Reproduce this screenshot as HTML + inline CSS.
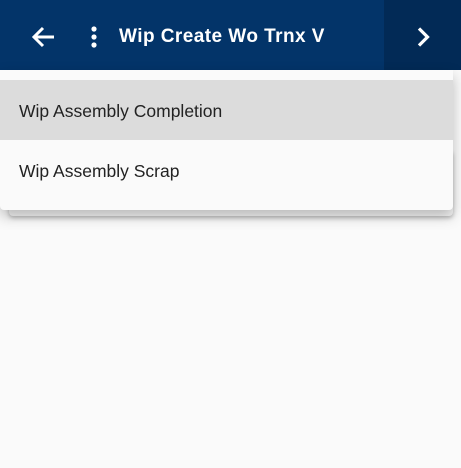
<!DOCTYPE html>
<html><head><style>
body{margin:0;width:461px;height:468px;background:#fafafa;font-family:"Liberation Sans",sans-serif;position:relative;overflow:hidden}
.hdr{position:absolute;left:0;top:0;width:461px;height:70px;background:#033469}
.dk{position:absolute;left:384px;top:0;width:77px;height:70px;background:#022a56}
.title{position:absolute;left:119px;top:26px;color:#fff;font-weight:bold;font-size:19px;letter-spacing:0.45px}
.card{position:absolute;left:9px;top:150px;width:444px;height:66px;background:#f5f5f5;border-radius:4px;box-shadow:0 2px 4px rgba(0,0,0,.25)}
.menu{position:absolute;left:0;top:70px;width:453px;height:140px;background:#fafafa;border-radius:0 0 4px 4px;box-shadow:0 6px 14px rgba(0,0,0,.25)}
.it{position:absolute;left:0;width:453px;height:60px;font-size:17.5px;color:#222;line-height:62px;padding-left:19px;box-sizing:border-box}
</style></head><body>
<div class="card"></div>
<div class="hdr"><div class="dk"></div>
<svg style="position:absolute;left:31px;top:25px" width="26" height="24" viewBox="0 0 26 24"><path d="M23 12H4M12 3L3 12l9 9" stroke="#fff" stroke-width="3" fill="none"/></svg>
<svg style="position:absolute;left:89px;top:25px" width="10" height="24"><circle cx="5" cy="4" r="2.6" fill="#fff"/><circle cx="5" cy="12" r="2.6" fill="#fff"/><circle cx="5" cy="20" r="2.6" fill="#fff"/></svg>
<div class="title">Wip Create Wo Trnx V</div>
<svg style="position:absolute;left:414px;top:26px" width="18" height="22"><path d="M5 2.5l8.5 8.5-8.5 8.5" stroke="#fff" stroke-width="3.2" fill="none"/></svg>
</div>
<div class="menu">
<div class="it" style="top:10px;background:#dcdcdc">Wip Assembly Completion</div>
<div class="it" style="top:70px">Wip Assembly Scrap</div>
</div>
</body></html>
